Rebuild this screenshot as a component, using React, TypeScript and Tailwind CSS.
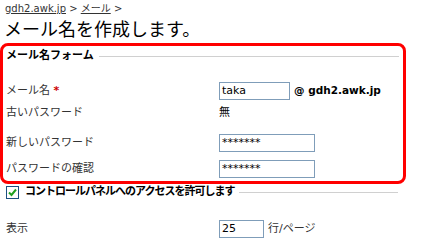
import React from "react";

const jp = { fontFamily: '"DejaVu Sans", "Noto Sans CJK JP", sans-serif' };

function Checkbox() {
  return (
    <div className="w-[13px] h-[13px] border border-[#1c5180] bg-white flex items-center justify-center shrink-0">
      <svg width="9" height="9" viewBox="0 0 9 9">
        <path d="M1 4.5 L3.5 7 L8 1.5" stroke="#21a121" strokeWidth="2" fill="none" />
      </svg>
    </div>
  );
}

function Input({ value, w }: { value: string; w: string }) {
  return (
    <div
      className={`${w} h-[18px] border border-[#7f9db9] bg-white text-[11px] leading-[16px] pl-[2px] text-black`}
      style={{ fontFamily: '"DejaVu Sans", sans-serif' }}
    >
      {value}
    </div>
  );
}

export default function App() {
  return (
    <div className="w-[424px] h-[252px] bg-white text-[#333] overflow-hidden" style={jp}>
      <div className="pl-[5px] pt-[2px] h-[17px] text-[10px] leading-[14px] text-[#333]">
        <span className="underline">gdh2.awk.jp</span>
        <span> &gt; </span>
        <span className="underline">メール</span>
        <span> &gt;</span>
      </div>
      <div className="pl-[4px] h-[26px] pt-[1px] text-[18px] leading-[24px] text-black">
        メール名を作成します。
      </div>
      <div className="w-[406px] h-[141px] border-[3px] border-[#ff0000] rounded-[8px] flex flex-col">
        <div className="h-[20px] flex items-center pl-[3px] pr-[4px]">
          <span className="text-[11px] font-bold text-black">メール名フォーム</span>
          <div className="flex-1 ml-[5px] h-px bg-[#d0d0d0]" />
        </div>
        <div className="mt-[16px] h-[18px] flex items-center">
          <div className="w-[216px] pl-[3px] text-[11px]">
            メール名 <span className="text-[#cc0000] font-bold">*</span>
          </div>
          <Input value="taka" w="w-[71px]" />
          <span className="ml-[4px] text-[10.5px] font-bold text-black" style={{ fontFamily: '"DejaVu Sans", sans-serif' }}>
            @ gdh2.awk.jp
          </span>
        </div>
        <div className="mt-[4px] h-[18px] flex items-center">
          <div className="w-[216px] pl-[3px] text-[11px]">古いパスワード</div>
          <span className="text-[11px] text-black">無</span>
        </div>
        <div className="mt-[12px] h-[18px] flex items-center">
          <div className="w-[216px] pl-[3px] text-[11px]">新しいパスワード</div>
          <Input value="*******" w="w-[96px]" />
        </div>
        <div className="mt-[8px] h-[18px] flex items-center">
          <div className="w-[216px] pl-[3px] text-[11px]">パスワードの確認</div>
          <Input value="*******" w="w-[96px]" />
        </div>
      </div>
      <div className="mt-[2px] h-[13px] flex items-center pl-[6px] w-[398px]">
        <Checkbox />
        <span className="ml-[6px] text-[11px] font-bold text-black tracking-[-1px]">
          コントロールパネルへのアクセスを許可します
        </span>
        <div className="flex-1 ml-[5px] h-px bg-[#d0d0d0]" />
      </div>
      <div className="mt-[21px] h-[18px] flex items-center">
        <div className="w-[219px] pl-[6px] text-[11px]">表示</div>
        <Input value="25" w="w-[45px]" />
        <span className="ml-[4px] text-[11px] text-[#333]">行/ページ</span>
      </div>
    </div>
  );
}
